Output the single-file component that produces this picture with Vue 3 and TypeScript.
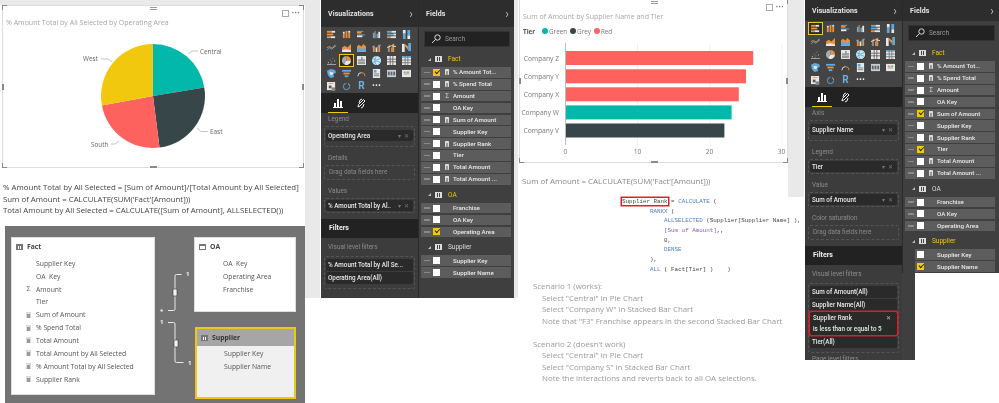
<template>
  <div class="page">
    <!-- first report -->
    <div class="col col-a">
      <div class="col-a-main">
        <div class="top-band"></div>
        <div class="visual visual-pie">
          <div class="grips"><i class="g tl"></i><i class="g tr"></i><i class="g bl"></i><i class="g br"></i><i class="g tm"></i><i class="g bm"></i><i class="g ml"></i><i class="g mr"></i></div>
          <div class="visual-tools"><span class="focus"></span><span class="more">···</span></div>
          <div class="visual-title">% Amount Total by All Selected by Operating Area</div>
          <svg class="pie" width="299" height="135" viewBox="3 27 299 135">
            <path d="M153 96V44A52 52 0 0 1 204.300 87.500Z" fill="#01b8aa" />
            <path d="M153 96L204.300 87.500A52 52 0 0 1 159.500 147.600Z" fill="#374649" />
            <path d="M153 96L159.500 147.600A52 52 0 0 1 101.900 105.500Z" fill="#fd625e" />
            <path d="M153 96L101.900 105.500A52 52 0 0 1 153 44Z" fill="#f2c80f" />
            <g fill="none" stroke="#aaa" stroke-width=".7">
              <path d="M188 54l4-3h6" />
              <path d="M197 128l4 3.500h7" />
              <path d="M119 141l-4 3h-4" />
              <path d="M112 62l-4-3h-7" />
            </g>
            <g class="pie-label">
              <text x="200" y="53.500">Central</text>
              <text x="210" y="134">East</text>
              <text x="91" y="146.500">South</text>
              <text x="83" y="61">West</text>
            </g>
          </svg>
        </div>
        <div class="measures">
          <div>% Amount Total by All Selected = [Sum of Amount]/[Total Amount by All Selected]</div>
          <div>Sum of Amount = CALCULATE(SUM('Fact'[Amount]))</div>
          <div>Total Amount by All Selected = CALCULATE([Sum of Amount], ALLSELECTED())</div>
        </div>
        <div class="diagram">
          <div class="table-card fact-card">
            <div class="table-head"><span class="tbl-ico"></span>Fact</div>
            <div v-for="c in factColumns" :key="c.name" class="table-col">
              <span class="col-ico" :class="c.kind">{{ c.kind === 'sigma' ? 'Σ' : '' }}</span>{{ c.name }}
            </div>
          </div>
          <div class="table-card oa-card">
            <div class="table-head"><span class="tbl-ico"></span>OA</div>
            <div v-for="n in ['OA  Key', 'Operating Area', 'Franchise']" :key="n" class="table-col"><span class="col-ico"></span>{{ n }}</div>
          </div>
          <div class="table-card supplier-card">
            <div class="table-head"><span class="tbl-ico"></span>Supplier</div>
            <div v-for="n in ['Supplier Key', 'Supplier Name']" :key="n" class="table-col"><span class="col-ico"></span>{{ n }}</div>
          </div>
          <svg class="links" width="300" height="177" viewBox="5 226 300 177">
            <g fill="none" stroke="#e8e8e8" stroke-width="1">
              <path d="M168 310.500h5.500q1.500 0 1.500-1.500v-33q0-1.500 1.500-1.500h5" />
              <path d="M168 322.500h5.500q1.500 0 1.500 1.500v37q0 1.500 1.500 1.500h7" />
            </g>
            <rect x="173" y="289" width="4" height="7" rx="1" fill="#f4f4f4" stroke="#333" stroke-width=".6" />
            <rect x="174" y="340" width="4" height="7" rx="1" fill="#f4f4f4" stroke="#333" stroke-width=".6" />
            <g class="link-label">
              <text x="160" y="313">*</text>
              <text x="160" y="324">1</text>
              <text x="186" y="276">1</text>
              <text x="188" y="365">1</text>
            </g>
          </svg>
        </div>
      </div>
      <div class="side-strip"></div>
    </div>

    <div class="col col-b">
      <div class="panes pane-one">
        <div class="viz-pane">
          <div class="pane-head tall"><span>Visualizations</span><span class="chev">›</span></div>
          <div class="gallery">
            <span v-for="(ic, i) in gallery" :key="i" class="gal-cell" :class="{ picked: i === 13 }">
              <span v-if="ic.text" class="gal-text" :style="{ color: ic.color }">{{ ic.text }}</span>
              <svg v-else width="9" height="9" viewBox="0 0 10 10">
                <rect v-for="(r, j) in ic.rects" :key="j" :x="r[0]" :y="r[1]" :width="r[2]" :height="r[3]" :fill="r[4]" />
                <path v-for="(p, j) in ic.paths" :key="'p' + j" :d="p[0]" :fill="p[1]" :stroke="p[2]" />
              </svg>
            </span>
          </div>
          <div class="tabs">
            <span class="tab on"><svg width="10" height="10" viewBox="0 0 10 10"><path d="M1 9V5h2v4zM4 9V1h2v8zM7 9V3h2v6z" fill="#fff" /><path d="M0 9.500h10" stroke="#fff" /></svg></span>
            <span class="tab"><svg width="11" height="11" viewBox="0 0 11 11"><path d="M2 9l2-1 5-5-1.500-1.500-5 5zM3 5l1-3 2-1M8 6l-1 3-2 1" fill="none" stroke="#eee" stroke-width="1" /></svg></span>
          </div>
          <div class="well-label first">Legend</div>
          <div class="well big"><div class="chip">Operating Area<em>▾ ✕</em></div></div>
          <div class="well-label">Details</div>
          <div class="well"><div class="drop">Drag data fields here</div></div>
          <div class="well-label">Values</div>
          <div class="well"><div class="chip">% Amount Total by Al..<em>▾ ✕</em></div></div>
          <div class="filters-band">Filters</div>
          <div class="well-label filters-label">Visual level filters</div>
          <div class="well filter-well">
            <div class="chip wide">% Amount Total by All Se...</div>
            <div class="chip wide">Operating Area(All)</div>
          </div>
        </div>
        <div class="fields-pane">
          <div class="fields-body">
            <div class="pane-head tall"><span>Fields</span><span class="chev">›</span></div>
            <div class="search"><svg width="10" height="10" viewBox="0 0 10 10"><circle cx="6.500" cy="3.500" r="2.700" fill="none" stroke="#ddd" /><path d="M4.500 5.500L1 9" stroke="#ddd" /></svg>Search</div>
            <template v-for="g in fieldsOne" :key="g.name">
              <div class="group"><span class="tri"></span><span class="grp-ico"></span><span :class="{ hot: g.hot }">{{ g.name }}</span></div>
              <div v-for="f in g.rows" :key="f.name" class="field"><span class="dash"></span><span class="check" :class="{ on: f.on }"></span><span class="field-ico" :class="f.kind">{{ f.kind === 'sigma' ? 'Σ' : '' }}</span>{{ f.name }}</div>
            </template>
          </div>
        </div>
      </div>
      <div class="side-strip"></div>
    </div>

    <!-- second report -->
    <div class="col col-c">
      <div class="col-c-main">
        <div class="visual visual-bar">
          <div class="grips"><i class="g tr"></i><i class="g bl"></i><i class="g br"></i><i class="g tm"></i><i class="g bm"></i><i class="g ml"></i><i class="g mr"></i></div>
          <div class="visual-tools"><span class="focus"></span><span class="more">···</span></div>
          <div class="visual-title">Sum of Amount by Supplier Name and Tier</div>
          <div class="legend">
            <b>Tier</b>
            <span v-for="l in tiers" :key="l.name" class="legend-item"><i :style="{ background: l.color }"></i>{{ l.name }}</span>
          </div>
          <svg class="bars" width="268" height="120" viewBox="519 41 268 120">
            <path v-for="x in [636.500, 709, 781]" :key="x" :d="`M${x} 43V145`" stroke="#f1f1f1" />
            <path d="M564.500 43V145" stroke="#bbb" />
            <rect v-for="b in bars" :key="b.name" x="565" :y="b.y" :width="b.value * 7.2" height="14" :fill="b.color" />
            <text v-for="b in bars" :key="'t' + b.name" class="axis-text" text-anchor="end" x="558" :y="b.y + 9.500">{{ b.name }}</text>
            <text v-for="t in [0, 10, 20, 30]" :key="t" class="axis-text" text-anchor="middle" :x="564.500 + t * 7.2" y="154">{{ t }}</text>
          </svg>
        </div>
        <div class="sum-line">Sum of Amount = CALCULATE(SUM('Fact'[Amount]))</div>
        <div class="dax">
          <div v-for="(line, i) in daxLines" :key="i" class="dax-line"><span v-for="(s, j) in line" :key="j" :class="s.c">{{ s.t }}</span></div>
        </div>
        <div class="scenarios">
          <template v-for="s in scenarios" :key="s.title">
            <div class="scen-title">{{ s.title }}</div>
            <div v-for="l in s.lines" :key="l" class="scen-line">{{ l }}</div>
          </template>
        </div>
      </div>
      <div class="side-strip short"></div>
    </div>

    <div class="col col-d">
      <div class="panes pane-two">
        <div class="viz-pane">
          <div class="pane-head"><span>Visualizations</span><span class="chev">›</span></div>
          <div class="gallery">
            <span v-for="(ic, i) in gallery" :key="i" class="gal-cell" :class="{ picked: i === 0 }">
              <span v-if="ic.text" class="gal-text" :style="{ color: ic.color }">{{ ic.text }}</span>
              <svg v-else width="9" height="9" viewBox="0 0 10 10">
                <rect v-for="(r, j) in ic.rects" :key="j" :x="r[0]" :y="r[1]" :width="r[2]" :height="r[3]" :fill="r[4]" />
                <path v-for="(p, j) in ic.paths" :key="'p' + j" :d="p[0]" :fill="p[1]" :stroke="p[2]" />
              </svg>
            </span>
          </div>
          <div class="tabs">
            <span class="tab on"><svg width="10" height="10" viewBox="0 0 10 10"><path d="M1 9V5h2v4zM4 9V1h2v8zM7 9V3h2v6z" fill="#fff" /><path d="M0 9.500h10" stroke="#fff" /></svg></span>
            <span class="tab"><svg width="11" height="11" viewBox="0 0 11 11"><path d="M2 9l2-1 5-5-1.500-1.500-5 5zM3 5l1-3 2-1M8 6l-1 3-2 1" fill="none" stroke="#eee" stroke-width="1" /></svg></span>
          </div>
          <div class="well-label first">Axis</div>
          <div class="well big"><div class="chip">Supplier Name<em>▾ ✕</em></div></div>
          <div class="well-label">Legend</div>
          <div class="well"><div class="chip">Tier<em>▾ ✕</em></div></div>
          <div class="well-label">Value</div>
          <div class="well"><div class="chip">Sum of Amount<em>▾ ✕</em></div></div>
          <div class="well-label">Color saturation</div>
          <div class="well"><div class="drop">Drag data fields here</div></div>
          <div class="filters-band">Filters</div>
          <div class="well-label filters-label">Visual level filters</div>
          <div class="well filter-well tall-well">
            <div class="chip wide">Sum of Amount(All)</div>
            <div class="chip wide">Supplier Name(All)</div>
            <div class="chip wide rank-filter"><span>Supplier Rank<em>✕</em></span><span>is less than or equal to 5</span></div>
            <div class="chip wide">Tier(All)</div>
          </div>
          <div class="well-label">Page level filters</div>
        </div>
        <div class="fields-pane">
          <div class="fields-body">
            <div class="pane-head"><span>Fields</span><span class="chev">›</span></div>
            <div class="search"><svg width="10" height="10" viewBox="0 0 10 10"><circle cx="6.500" cy="3.500" r="2.700" fill="none" stroke="#ddd" /><path d="M4.500 5.500L1 9" stroke="#ddd" /></svg>Search</div>
            <template v-for="g in fieldsTwo" :key="g.name">
              <div class="group"><span class="tri"></span><span class="grp-ico"></span><span :class="{ hot: g.hot }">{{ g.name }}</span></div>
              <div v-for="f in g.rows" :key="f.name" class="field" :class="{ inset: g.name === 'Supplier' }"><span class="dash"></span><span class="check" :class="{ on: f.on }"></span><span class="field-ico" :class="f.kind">{{ f.kind === 'sigma' ? 'Σ' : '' }}</span>{{ f.name }}</div>
            </template>
          </div>
        </div>
      </div>
    </div>
  </div>
</template>

<script setup lang="ts">
type Rect = [number, number, number, number, string]
type Shape = [string, string, string]

interface GalleryIcon {
  rects?: Rect[]
  paths?: Shape[]
  text?: string
  color?: string
}

interface Field {
  name: string
  kind?: 'calc' | 'sigma'
  on?: boolean
}

interface FieldGroup {
  name: string
  hot?: boolean
  rows: Field[]
}

const W = '#e8e8e8'
const O = '#e8923a'
const B = '#5fa9dc'
const N = 'none'

const gallery: GalleryIcon[] = [
  { rects: [[0, 1, 5, 2, O], [5, 1, 4, 2, W], [0, 4, 7, 2, O], [0, 7, 4, 2, O], [4, 7, 5, 2, W]] },
  { rects: [[1, 4, 2, 5, O], [1, 2, 2, 2, W], [4, 1, 2, 8, O], [7, 3, 2, 6, O], [7, 1, 2, 2, W]] },
  { rects: [[0, 1, 7, 1, B], [0, 2, 5, 2, O], [0, 5, 9, 1, B], [0, 6, 6, 2, W]] },
  { rects: [[1, 3, 2, 6, B], [3, 1, 1, 8, O], [5, 4, 2, 5, B], [7, 2, 2, 7, W]] },
  { rects: [[0, 1, 5, 2, B], [5, 1, 5, 2, W], [0, 4, 7, 2, B], [7, 4, 3, 2, W], [0, 7, 4, 2, O], [4, 7, 6, 2, W]] },
  { rects: [[1, 0, 3, 4, W], [1, 4, 3, 6, B], [6, 0, 3, 6, B], [6, 6, 3, 4, W]] },
  { paths: [['M0 8l3-3 2 2 4-5', N, B], ['M0 5l3-1 3 2 4-3', N, O]] },
  { paths: [['M0 10V5l3-2 3 2 4-4v9z', O, N], ['M0 10V8l4-1 6 1v2z', W, N]] },
  { paths: [['M0 10V4l2-2 3 2 2-3 3 3v6z', O, N], ['M0 9V7l3-2 3 2 4-2v4z', B, N]] },
  { rects: [[1, 3, 2, 7, O], [4, 5, 2, 5, W], [7, 2, 2, 8, O]], paths: [['M0 4l4 2 6-4', N, B]] },
  { rects: [[1, 4, 1, 6, B], [2, 2, 1, 8, O], [5, 5, 1, 5, W], [6, 1, 2, 9, O]], paths: [['M0 5l5-2 5 1', N, W]] },
  { rects: [[0, 1, 3, 9, W], [7, 0, 3, 9, B]], paths: [['M3 3l4 5V4l-4-3z', O, N]] },
  { rects: [[1, 7, 1, 1, W], [3, 4, 1, 1, B], [5, 6, 1, 1, O], [6, 2, 1, 1, B], [8, 5, 1, 1, W], [4, 8, 1, 1, O], [0, 9, 10, 1, '#aaa']] },
  { paths: [['M5 5V0a5 5 0 0 1 5 5z', O, N], ['M5 5h5a5 5 0 0 1-8 4z', W, N], ['M5 5L2 9A5 5 0 0 1 5 0z', '#aaa', N]] },
  { rects: [[0, 0, 10, 10, W], [1, 4, 8, 1, '#555'], [5, 1, 1, 3, '#555'], [1, 6, 8, 3, '#999']] },
  { paths: [['M5 0a5 5 0 1 0 .1 0z', '#cfe6f5', N], ['M1 3q4 3 8 0M1 7q4-3 8 0M5 0q-4 5 0 10', N, B]] },
  { rects: [[0, 0, 10, 10, W], [3, 0, 1, 10, '#666'], [6, 0, 1, 10, '#666'], [0, 3, 10, 1, '#666'], [0, 6, 10, 1, '#666']] },
  { rects: [[0, 0, 10, 10, W], [0, 0, 10, 2, B], [3, 0, 1, 10, '#777'], [6, 0, 1, 10, '#777'], [0, 4, 10, 1, '#777'], [0, 7, 10, 1, '#777']] },
  { paths: [['M0 2l4-2 5 1 1 3-3 2 1 3-4 1-3-3z', B, N], ['M3 3l4 1-1 3-3-1z', W, N]] },
  { rects: [[0, 1, 10, 2, B], [1.500, 4, 7, 2, O], [3, 7, 4, 2, B]] },
  { paths: [['M1 8a4 4 0 0 1 4-4', N, W], ['M5 4a4 4 0 0 1 4 4', N, O]] },
  { rects: [[1, 0, 8, 10, W], [2, 1, 3, 3, B], [2, 5, 6, 1, '#777'], [2, 7, 6, 1, '#777']] },
  { rects: [[0, 1, 10, 8, '#ccc'], [1, 3, 2, 4, '#567'], [4, 3, 2, 4, '#567'], [7, 3, 2, 4, '#567']] },
  { rects: [[0, 1, 10, 8, W], [2, 3, 2, 1, '#d33'], [5, 3, 3, 1, '#393'], [2, 5, 6, 1, '#999']] },
  { rects: [[0, 0, 9, 9, W], [2, 4, 3, 3, '#555'], [2, 1, 5, 1, O], [5, 6, 4, 4, '#888']] },
  { paths: [['M5 1.500a3.500 3.500 0 1 0 3.500 3.500', N, B], ['M7 2a3.500 3.500 0 0 1 1.500 2', N, W]] },
  { text: 'R', color: '#6fb0e0' },
  { text: '···', color: '#eee' },
]

const factColumns: { name: string; kind?: string }[] = [
  { name: 'Supplier Key' },
  { name: 'OA  Key' },
  { name: 'Amount', kind: 'sigma' },
  { name: 'Tier' },
  { name: 'Sum of Amount', kind: 'calc' },
  { name: '% Spend Total', kind: 'calc' },
  { name: 'Total Amount', kind: 'calc' },
  { name: 'Total Amount by All Selected', kind: 'calc' },
  { name: '% Amount Total by All Selected', kind: 'calc' },
  { name: 'Supplier Rank', kind: 'calc' },
]

const factRows = (checked: string[]): Field[] => [
  { name: '% Amount Tot...', kind: 'calc' },
  { name: '% Spend Total', kind: 'calc' },
  { name: 'Amount', kind: 'sigma' },
  { name: 'OA Key' },
  { name: 'Sum of Amount', kind: 'calc' },
  { name: 'Supplier Key' },
  { name: 'Supplier Rank', kind: 'calc' },
  { name: 'Tier' },
  { name: 'Total Amount', kind: 'calc' },
  { name: 'Total Amount ...', kind: 'calc' },
].map((f) => ({ ...f, kind: f.kind as Field['kind'], on: checked.includes(f.name) }))

const fieldsOne: FieldGroup[] = [
  { name: 'Fact', hot: true, rows: factRows(['% Amount Tot...']) },
  { name: 'OA', hot: true, rows: [{ name: 'Franchise' }, { name: 'OA Key' }, { name: 'Operating Area', on: true }] },
  { name: 'Supplier', rows: [{ name: 'Supplier Key' }, { name: 'Supplier Name' }] },
]

const fieldsTwo: FieldGroup[] = [
  { name: 'Fact', hot: true, rows: factRows(['Sum of Amount', 'Tier']) },
  { name: 'OA', rows: [{ name: 'Franchise' }, { name: 'OA Key' }, { name: 'Operating Area' }] },
  { name: 'Supplier', hot: true, rows: [{ name: 'Supplier Key' }, { name: 'Supplier Name', on: true }] },
]

const tiers = [
  { name: 'Green', color: '#01b8aa' },
  { name: 'Grey', color: '#374649' },
  { name: 'Red', color: '#fd625e' },
]

const bars = [
  { name: 'Company Z', value: 26, y: 51, color: '#fd625e' },
  { name: 'Company Y', value: 25, y: 69.3, color: '#fd625e' },
  { name: 'Company X', value: 24, y: 87.3, color: '#fd625e' },
  { name: 'Company W', value: 23, y: 105.4, color: '#01b8aa' },
  { name: 'Company V', value: 22, y: 123.5, color: '#374649' },
]

const daxLines: { t: string; c?: string }[][] = [
  [{ t: 'Supplier Rank', c: 'rank-box' }, { t: ' = ' }, { t: 'CALCULATE', c: 'kw' }, { t: ' (' }],
  [{ t: '        ' }, { t: 'RANKX', c: 'kw' }, { t: ' (' }],
  [{ t: '            ' }, { t: 'ALLSELECTED', c: 'kw' }, { t: ' (Supplier[Supplier Name] ),' }],
  [{ t: '            ' }, { t: '[Sum of Amount]', c: 'meas' }, { t: ',,' }],
  [{ t: '            0,' }],
  [{ t: '            ' }, { t: 'DENSE', c: 'kw' }],
  [{ t: '        ),' }],
  [{ t: '        ' }, { t: 'ALL', c: 'kw' }, { t: ' ( Fact[Tier] )    )' }],
]

const scenarios = [
  {
    title: 'Scenario 1 (works):',
    lines: ['Select "Central" in Pie Chart', 'Select "Company W" in Stacked Bar Chart', 'Note that "F3" Franchise appears in the second Stacked Bar Chart'],
  },
  {
    title: "Scenario 2 (doesn't work)",
    lines: ['Select "Central" in Pie Chart', 'Select "Company S" in Stacked Bar Chart', 'Note the interactions and reverts back to all OA selections.'],
  },
]
</script>

<style>
html,
body {
  margin: 0;
  background: #fff;
}
</style>

<style scoped>
.page {
  display: flex;
  width: 999px;
  height: 403px;
  overflow: hidden;
  background: #fff;
  font-family: "Open Sans", "Liberation Sans", sans-serif;
  filter: blur(0.35px);
}
.col {
  flex: none;
  display: flex;
  height: 403px;
}
.col-a { width: 320px; }
.col-b { width: 198px; }
.col-c { width: 287px; padding-left: 1px; box-sizing: border-box; }
.col-d { width: 194px; }

.col-a-main { width: 305px; }
.top-band { height: 5px; background: #e9e9e9; }
.side-strip { flex: 1; height: 298px; background: #e9e9e9; }
.side-strip.short { height: 197px; margin-right: 1px; }

.visual {
  position: relative;
  box-sizing: border-box;
  background: #fff;
  border: 1px solid #ddd;
}
.visual-pie { width: 302px; height: 163px; margin-left: 2px; }
.visual-bar { width: 269px; height: 163px; border-top: 0; }
.visual-title {
  padding: 11px 0 0 3px;
  font-size: 7.050px;
  line-height: 10px;
  color: #a6a6a6;
  white-space: nowrap;
}
.visual-tools {
  position: absolute;
  top: 3px;
  right: 3px;
  display: flex;
  align-items: center;
  gap: 3px;
}
.focus { width: 5px; height: 5px; border: 1px solid #aaa; }
.more { font-size: 8px; line-height: 8px; font-weight: 700; letter-spacing: .5px; color: #777; }
.g { position: absolute; background: #8a8a8a; z-index: 2; }
.g.tl, .g.tr, .g.bl, .g.br { width: 4px; height: 4px; background: none; border: 0 solid #888; }
.g.tl { left: -1px; top: -1px; border-width: 1px 0 0 1px; }
.g.tr { right: -1px; top: -1px; border-width: 1px 1px 0 0; }
.g.bl { left: -1px; bottom: -1px; border-width: 0 0 1px 1px; }
.g.br { right: -1px; bottom: -1px; border-width: 0 1px 1px 0; }
.g.tm { top: 1px; left: 50%; width: 7px; height: 4px; margin-left: -3px; background: repeating-linear-gradient(#999 0 1px, #fff 1px 2px); }
.g.bm { bottom: -1px; left: 50%; width: 7px; height: 2px; margin-left: -3px; }
.g.ml { left: -1px; top: 50%; width: 2px; height: 6px; margin-top: -3px; }
.g.mr { right: -1px; top: 50%; width: 2px; height: 6px; margin-top: -3px; }

.pie { display: block; }
.pie-label text { font-size: 6.400px; fill: #666; }

.measures {
  padding: 14px 0 0 3px;
  height: 58px;
  box-sizing: border-box;
  font-size: 7.850px;
  line-height: 11.500px;
  color: #444;
  white-space: nowrap;
}

.diagram {
  position: relative;
  margin-left: 5px;
  width: 300px;
  height: 177px;
  background: #737373;
}
.links { position: absolute; left: 0; top: 0; }
.link-label text { font-size: 6px; font-weight: 700; fill: #f0f0f0; }
.table-card {
  position: absolute;
  box-sizing: border-box;
  background: #fff;
  border: 1px solid #ddd;
  font-size: 6.800px;
  color: #555;
}
.fact-card { left: 6px; top: 11px; width: 144px; height: 158px; }
.oa-card { left: 189px; top: 11px; width: 102px; height: 75px; }
.supplier-card {
  left: 190px;
  top: 101px;
  width: 101px;
  height: 72px;
  background: #f0f0f0;
  border: 2px solid #f2c80f;
}
.table-head {
  display: flex;
  align-items: center;
  height: 17px;
  margin-bottom: 2px;
  padding-left: 4px;
  font-weight: 700;
  color: #444;
}
.supplier-card .table-head { background: #a6a6a6; color: #333; height: 17px; margin-bottom: 1px; padding-left: 4px; }
.tbl-ico {
  flex: none;
  box-sizing: border-box;
  width: 7px;
  height: 6px;
  margin-right: 4px;
  border: 1px solid #777;
  border-top-width: 2px;
  background: repeating-linear-gradient(90deg, #777 0 1px, #fff 1px 2px);
}
.oa-card .tbl-ico { background: #fff; }
.table-col {
  display: flex;
  align-items: center;
  height: 12.850px;
  padding-left: 14px;
  white-space: pre;
}
.col-ico {
  flex: none;
  width: 5px;
  height: 6px;
  margin-right: 5px;
  font-size: 7px;
  line-height: 6px;
  text-align: center;
  color: #666;
}
.col-ico.calc, .field-ico.calc { background: #999; border-radius: 1px; box-shadow: inset 0 1px 0 1px #ddd; }
.oa-card .table-col, .supplier-card .table-col { padding-left: 18px; }
.supplier-card .table-col { padding-left: 17px; }

.panes { display: flex; font-family: Roboto, "Liberation Sans", sans-serif; }
.pane-one { height: 298px; margin-left: 1px; width: 193px; }
.pane-two { height: 360px; width: 194px; }
.viz-pane {
  flex: none;
  width: 97px;
  overflow: hidden;
  background: #3c3c3c;
  color: #eee;
}
.fields-pane { flex: 1; }
.pane-two .fields-pane {
  background: linear-gradient(#3f3f3f, #3f3f3f) left / 13px 100% no-repeat;
}
.fields-body { background: #3f3f3f; border-left: 1px solid #2a2a2a; }
.pane-one .fields-body { height: 298px; }
.pane-two .fields-body { height: 273px; }
.pane-head {
  display: flex;
  align-items: center;
  justify-content: space-between;
  height: 21px;
  padding: 0 5px 0 7px;
  background: #2d2d2d;
  font-size: 7px;
  font-weight: 700;
  letter-spacing: .1px;
  color: #e6e6e6;
}
.pane-head.tall { height: 27px; }
.chev { font-size: 12px; font-weight: 400; color: #bbb; }
.gallery {
  display: grid;
  grid-template-columns: repeat(6, 15px);
  grid-auto-rows: 12.900px;
  height: 66px;
  box-sizing: border-box;
  padding: 1px 0 0 3px;
  background: #444;
  align-content: start;
}
.gal-cell {
  display: flex;
  align-items: center;
  justify-content: center;
  box-sizing: border-box;
}
.gal-cell.picked { outline: 1px solid #f2c80f; outline-offset: -1px; background: #2d2d2d; }
.gal-text { font-size: 10px; font-weight: 700; line-height: 10px; }
.tabs {
  display: flex;
  height: 20px;
  padding-left: 7px;
  background: #222;
  box-sizing: border-box;
}
.tab { display: flex; align-items: center; justify-content: center; width: 20px; margin-right: 3px; }
.tab.on { box-shadow: inset 0 -1px 0 #f2c80f; }
.well-label {
  height: 11px;
  margin-bottom: 1px;
  padding-left: 7px;
  font-size: 6.400px;
  line-height: 11px;
  color: #8c8c8c;
  white-space: nowrap;
}
.well-label.first { margin-top: 1px; }
.well {
  box-sizing: border-box;
  height: 15px;
  margin: 0 3px 6px;
  padding: 1px;
  border: 1px dashed #555;
  border-radius: 2px;
}
.well.big { height: 21px; padding-top: 3px; }
.chip {
  display: flex;
  align-items: center;
  justify-content: space-between;
  height: 11px;
  padding: 0 3px 0 2px;
  background: #2a2a2a;
  border-radius: 2px;
  font-size: 6.300px;
  font-weight: 500;
  color: #e8e8e8;
  white-space: nowrap;
  overflow: hidden;
}
.chip em { font-style: normal; font-size: 5.500px; color: #777; letter-spacing: 1px; }
.drop { padding-left: 3px; font-size: 6.400px; line-height: 11px; color: #888; white-space: nowrap; }
.filters-band {
  height: 19px;
  padding-left: 8px;
  background: #222;
  font-size: 7px;
  font-weight: 700;
  line-height: 19px;
  color: #eee;
}
.filters-label { margin: 4px 0 3px; }
.filter-well { height: 33px; padding: 2px 1px; }
.tall-well { height: 70px; margin-bottom: 1px; }
.filter-well .chip { height: 12px; margin-bottom: 1px; }
.filter-well .rank-filter {
  position: relative;
  z-index: 1;
  flex-direction: column;
  align-items: stretch;
  justify-content: center;
  height: 23px;
  padding: 0 5px 0 3px;
  box-shadow: 0 0 0 1.500px #d1232b;
  line-height: 10.500px;
}
.rank-filter span { display: flex; justify-content: space-between; align-items: center; }
.rank-filter em { font-size: 6px; color: #bbb; }

.search {
  display: flex;
  align-items: center;
  gap: 4px;
  box-sizing: border-box;
  height: 16px;
  margin: 4px 4px 0 5px;
  padding-left: 6px;
  background: #222;
  border: 1px solid #333;
  font-size: 6.500px;
  color: #999;
}
.group {
  display: flex;
  align-items: center;
  height: 18px;
  margin-top: 3px;
  padding-left: 9px;
  font-size: 6.500px;
  color: #ddd;
}
.group + .field { margin-top: -1px; }
.field + .group { margin-top: 0; }
.hot { color: #f2c80f; }
.tri { width: 0; height: 0; margin-right: 4px; border-left: 3px solid transparent; border-bottom: 3px solid #bbb; }
.grp-ico {
  box-sizing: border-box;
  width: 7px;
  height: 6px;
  margin-right: 6px;
  border: 1px solid #ddd;
  background: repeating-linear-gradient(90deg, #ddd 0 1px, #444 1px 2px);
}
.field {
  display: flex;
  align-items: center;
  height: 10.700px;
  margin: 0 3px 1.200px 2px;
  background: #5c5c5c;
  font-size: 6.200px;
  font-weight: 500;
  color: #e8e8e8;
  white-space: nowrap;
}
.pane-two .field { margin-right: 4px; }
.dash { flex: none; width: 6px; height: 1.500px; margin: 0 3px; background: #8a8a8a; }
.check { flex: none; box-sizing: border-box; width: 7px; height: 7px; margin-right: 5px; background: #fff; }
.check.on { background: #f2c80f; position: relative; }
.check.on::after {
  content: "";
  position: absolute;
  left: 1.500px;
  top: 1px;
  width: 3.500px;
  height: 2px;
  border: solid #222;
  border-width: 0 0 1.300px 1.300px;
  transform: rotate(-45deg);
}
.field-ico {
  flex: none;
  width: 4px;
  height: 6px;
  margin-right: 4px;
  font-size: 6.500px;
  line-height: 6px;
  text-align: center;
  color: #bbb;
}
.field.inset { margin-left: 12px; padding-left: 2px; }
.field.inset .dash { display: none; }

.col-c-main { width: 269px; }
.legend {
  display: flex;
  align-items: center;
  height: 10px;
  margin-top: 5px;
  padding-left: 3px;
  font-size: 6.300px;
  color: #777;
}
.legend b { width: 19px; color: #555; }
.legend-item { display: flex; align-items: center; margin-right: 3px; }
.legend-item i { width: 6px; height: 6px; margin-right: 1px; border-radius: 50%; }
.bars { display: block; position: absolute; left: 0; top: 41px; }
.axis-text { font-size: 6.700px; fill: #777; }
.sum-line {
  padding: 13px 0 0 3px;
  height: 26px;
  box-sizing: border-box;
  font-size: 7.900px;
  line-height: 11px;
  color: #888;
  white-space: nowrap;
}
.dax {
  padding: 8px 0 0 103px;
  font-family: "Liberation Mono", monospace;
  font-size: 5.850px;
  color: #444;
}
.dax-line { height: 9.670px; line-height: 9.670px; white-space: pre; }
.rank-box { box-shadow: 0 0 0 1.500px #d9232d; }
.kw { color: #4a7fc4; }
.meas { color: #8a5fb0; }
.scenarios {
  padding: 7px 0 0 14px;
  font-size: 7.900px;
  line-height: 11.500px;
  color: #999;
  white-space: nowrap;
}
.scen-line { padding-left: 9px; }
.scen-line:nth-child(4) { margin-bottom: 11.500px; }
</style>
